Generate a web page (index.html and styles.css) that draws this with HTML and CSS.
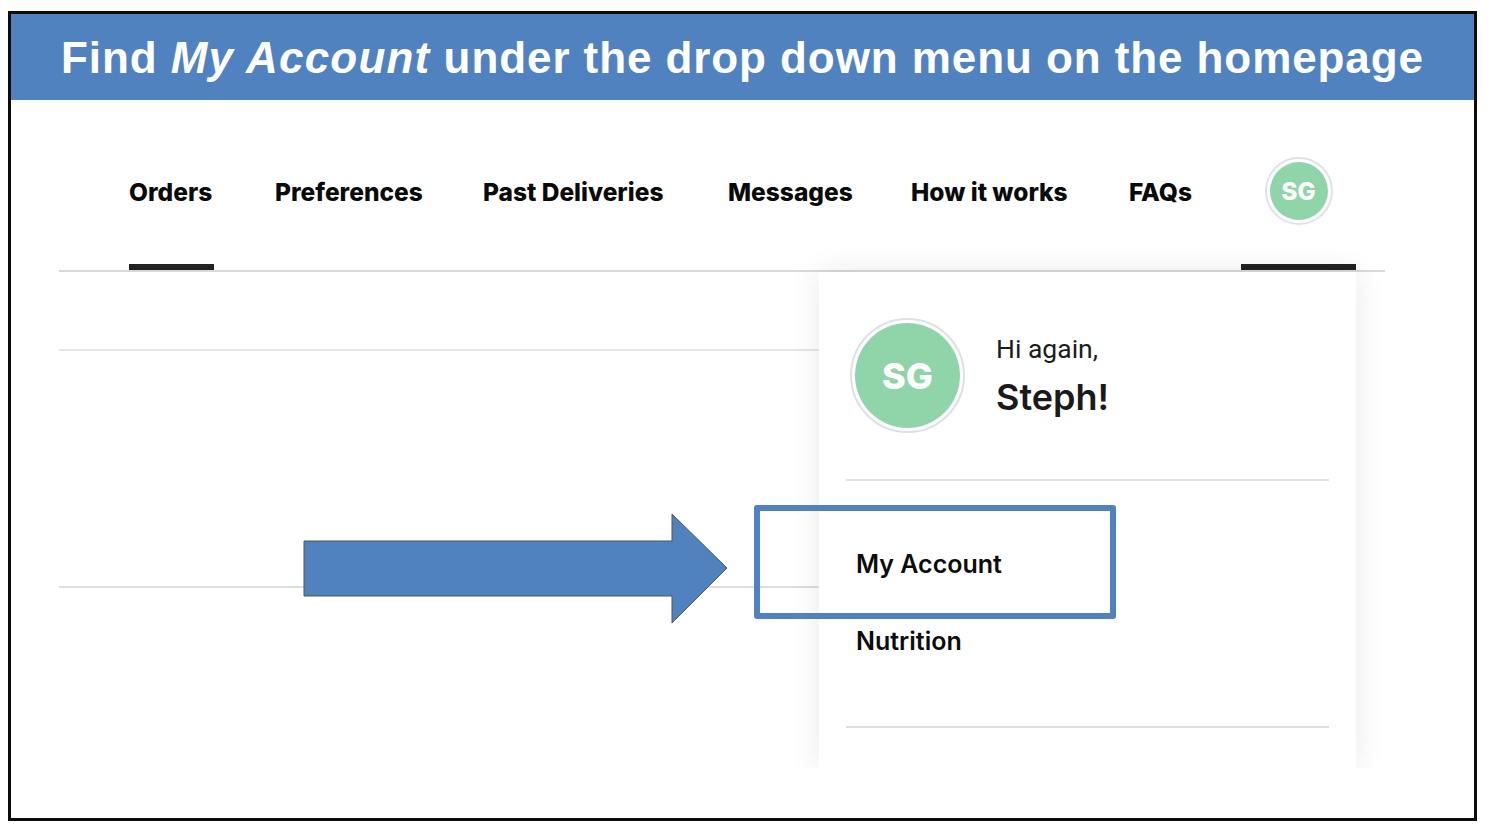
FILE: index.html
```html
<!DOCTYPE html>
<html lang="en">
  <head>
    <meta charset="UTF-8" />
    <meta name="viewport" content="width=device-width, initial-scale=1.0" />
    <title>Find My Account</title>
    <link rel="stylesheet" href="styles.css">
  </head>
  <body>
    <div class="slide">
      <h1 class="banner">Find <em>My Account</em> under the drop down menu on the homepage</h1>

      <div class="content">
        <nav class="nav">
          <a class="tab active">Orders</a>
          <a class="tab">Preferences</a>
          <a class="tab">Past Deliveries</a>
          <a class="tab">Messages</a>
          <a class="tab">How it works</a>
          <a class="tab">FAQs</a>
          <div class="tab tab-user active">
            <span class="avatar avatar-small">SG</span>
          </div>
        </nav>
        <div class="row row-first"></div>
        <div class="row row-second"></div>

        <div class="dropdown">
          <div class="greeting">
            <span class="avatar avatar-large">SG</span>
            <div class="greeting-text">
              <div class="hello">Hi again,</div>
              <div class="name">Steph!</div>
            </div>
          </div>
          <ul class="menu">
            <li>My Account</li>
            <li>Nutrition</li>
          </ul>
        </div>

        <!-- slide annotations -->
        <svg class="arrow" width="426" height="112" viewBox="0 0 426 112">
          <polygon points="1,28 369,28 369,1 424,55 369,110 369,83 1,83" fill="#5182c0" stroke="#555" stroke-width="1" />
        </svg>
        <div class="callout"></div>
      </div>
    </div>
  </body>
</html>
```

FILE: styles.css
```css
html,
body {
  height: 100%;
}
body {
  margin: 0;
  padding: 11px 13px 11px 8px;
  box-sizing: border-box;
  background-color: #fff;
  color: #111;
  font-family: "Inter", "Liberation Sans", sans-serif;
}
.slide {
  height: 100%;
  box-sizing: border-box;
  border: 3px solid #0c0c0c;
  display: flex;
  flex-direction: column;
}
.banner {
  margin: 0;
  height: 86px;
  flex-shrink: 0;
  box-sizing: border-box;
  padding-top: 2px;
  line-height: 84px;
  text-align: center;
  background-color: #5182c0;
  color: #fff;
  font-family: "Liberation Sans", Arial, sans-serif;
  font-size: 44px;
  font-weight: 700;
  letter-spacing: 0.92px;
  white-space: nowrap;
}
.banner em {
  letter-spacing: 1.2px;
}
.content {
  position: relative;
  flex: 1;
  padding: 0 29px 0 48px;
}
.nav {
  height: 170px;
  display: grid;
  grid-template-columns: 85px 147px 184px 122px 157px 64px 115px;
  column-gap: 61px;
  padding-left: 70px;
  border-bottom: 2px solid #d9d9d9;
  margin-right: 60px;
}
.tab {
  display: flex;
  align-items: center;
  box-sizing: border-box;
  height: 170px;
  padding-top: 19px;
  border-bottom: 6px solid transparent;
  font-size: 24.5px;
  font-weight: 800;
  color: #0a0a0a;
  white-space: nowrap;
}
.tab.active {
  border-bottom-color: #222;
}
.tab-user {
  margin-left: -13px;
  margin-right: 13px;
  justify-content: center;
  padding-top: 18px;
}
.avatar {
  display: flex;
  align-items: center;
  justify-content: center;
  box-sizing: border-box;
  border-radius: 50%;
  background-color: #90d5a9;
  background-clip: content-box;
  color: #fff;
  font-weight: 800;
  flex-shrink: 0;
}
.avatar-small {
  width: 68px;
  height: 68px;
  padding: 3px;
  border: 2px solid #dfe2e6;
  font-size: 24px;
}
.avatar-large {
  width: 115px;
  height: 115px;
  padding: 3px;
  border: 2px solid #dde1e6;
  font-size: 36px;
}
.row {
  border-bottom: 2px solid #e2e5ea;
  margin-right: 565px;
}
.row-first {
  height: 77px;
}
.row-second {
  height: 235px;
  border-bottom-color: #dcdfe2;
}
.dropdown {
  position: absolute;
  left: 808px;
  top: 172px;
  width: 537px;
  height: 496px;
  box-sizing: border-box;
  padding: 0 27px;
  background-color: #fff;
  box-shadow: 0 0 30px rgba(0, 0, 0, 0.09);
  clip-path: inset(-30px -30px 0 -30px);
}
.greeting {
  height: 209px;
  box-sizing: border-box;
  padding: 46px 0 0 4px;
  display: flex;
  gap: 31px;
  border-bottom: 2px solid #dfe2e6;
}
.greeting-text {
  padding-top: 13px;
}
.hello {
  font-family: "Roboto", sans-serif;
  font-size: 26.5px;
  line-height: 36px;
  color: #1c1c1c;
}
.name {
  margin-top: 8px;
  font-size: 36px;
  font-weight: 600;
  line-height: 44px;
  color: #1a1a1a;
}
.menu {
  list-style-type: none;
  margin: 0;
  padding: 59px 0 0 10px;
  height: 247px;
  box-sizing: border-box;
  border-bottom: 2px solid #dcdfe2;
}
.menu li {
  height: 77px;
  line-height: 48px;
  font-size: 25px;
  font-weight: 600;
  color: #0c0c0c;
}
.arrow {
  position: absolute;
  left: 292px;
  top: 413px;
}
.callout {
  position: absolute;
  left: 743px;
  top: 405px;
  width: 362px;
  height: 114px;
  box-sizing: border-box;
  border: 6px solid #5182c0;
  border-radius: 3px;
}
```
